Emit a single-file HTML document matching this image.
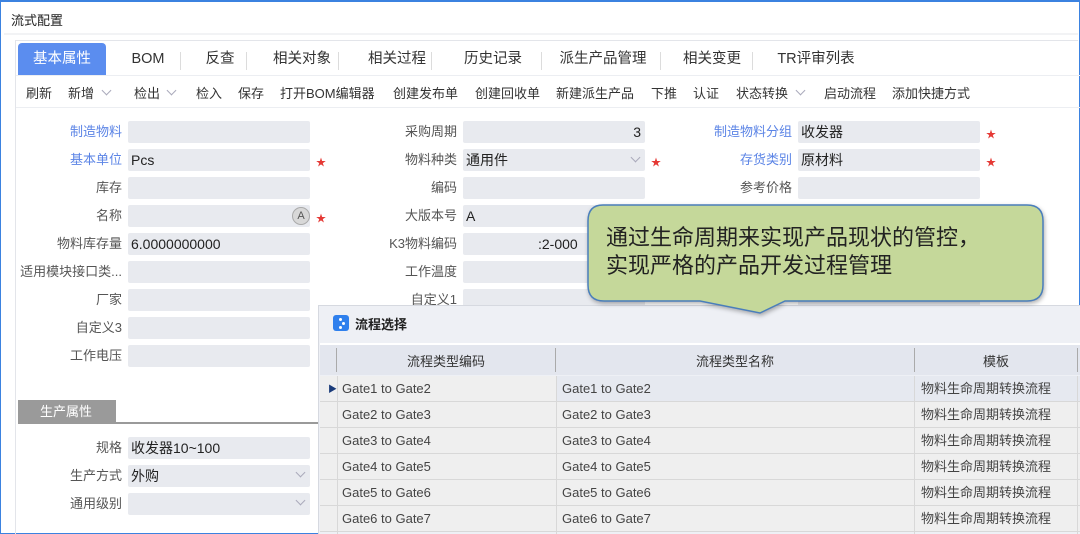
<!DOCTYPE html>
<html><head><meta charset="utf-8"><style>
*{margin:0;padding:0;box-sizing:border-box}
body{width:1080px;height:534px;overflow:hidden;background:#fff;font-family:"Liberation Sans","Noto Sans CJK SC",sans-serif;position:relative;color:#333}
.a{position:absolute;white-space:nowrap}
.lb{position:absolute;font-size:13px;color:#555;text-align:right;width:120px;line-height:22px}
.bl{color:#5b84e6}
.in{position:absolute;height:22px;background:#e8eaef;border-radius:2px;font-size:14px;color:#222;line-height:22px;padding-left:3px}
.st{position:absolute;color:#e53935;font-size:10px}
.tab{position:absolute;top:42px;height:32px;line-height:34px;font-size:14.5px;color:#333;text-align:center}
.sep{position:absolute;top:52px;width:1px;height:18px;background:#dcdcdc}
.tb{position:absolute;top:83px;font-size:13px;color:#333}
.chev{position:absolute;width:7px;height:7px;border-right:1px solid #aab;border-bottom:1px solid #aab;transform:rotate(45deg)}
.row{position:absolute;left:320px;width:760px;height:26px;font-size:13px;color:#444;line-height:26px;border-bottom:1px solid #d8d8d8;background:#efefef}
.row span{position:absolute;top:0}
</style></head><body>
<div class="a" style="left:0;top:0;width:1080px;height:534px;border:1px solid #3b82e0;border-top:2px solid #3b82e0"></div>
<div class="a" style="left:11px;top:10px;font-size:13px;color:#222">流式配置</div>
<div class="a" style="left:4px;top:33px;width:1074px;height:2px;background:#f2f3f5"></div>
<div class="a" style="left:15px;top:40px;width:1063px;height:494px;border-left:1px solid #e3e5ea;border-top:1px solid #e3e5ea"></div>
<div class="a" style="left:18px;top:43px;width:88px;height:32px;background:#5b8def;border-radius:4px 4px 0 0"></div>
<div class="tab" style="left:18px;width:88px;color:#fff">基本属性</div>
<div class="tab" style="left:118px;width:60px">BOM</div><div class="sep" style="left:180px"></div>
<div class="tab" style="left:190px;width:60px">反查</div><div class="sep" style="left:246px"></div>
<div class="tab" style="left:262px;width:80px">相关对象</div><div class="sep" style="left:338px"></div>
<div class="tab" style="left:357px;width:80px">相关过程</div><div class="sep" style="left:431px"></div>
<div class="tab" style="left:453px;width:80px">历史记录</div><div class="sep" style="left:541px"></div>
<div class="tab" style="left:553px;width:100px">派生产品管理</div><div class="sep" style="left:660px"></div>
<div class="tab" style="left:672px;width:80px">相关变更</div><div class="sep" style="left:752px"></div>
<div class="tab" style="left:766px;width:100px">TR评审列表</div>
<div class="a" style="left:16px;top:75px;width:1064px;height:1px;background:#eceef2"></div>
<div class="a" style="left:16px;top:107px;width:1064px;height:1px;background:#eceef2"></div>
<div class="tb" style="left:26px">刷新</div>
<div class="tb" style="left:68px">新增</div><div class="chev" style="left:103px;top:87px"></div>
<div class="tb" style="left:134px">检出</div><div class="chev" style="left:168px;top:87px"></div>
<div class="tb" style="left:196px">检入</div>
<div class="tb" style="left:238px">保存</div>
<div class="tb" style="left:280px">打开BOM编辑器</div>
<div class="tb" style="left:393px">创建发布单</div>
<div class="tb" style="left:475px">创建回收单</div>
<div class="tb" style="left:556px">新建派生产品</div>
<div class="tb" style="left:651px">下推</div>
<div class="tb" style="left:693px">认证</div>
<div class="tb" style="left:736px">状态转换</div><div class="chev" style="left:797px;top:87px"></div>
<div class="tb" style="left:824px">启动流程</div>
<div class="tb" style="left:892px">添加快捷方式</div>

<div class="lb bl" style="left:2px;top:121px">制造物料</div><div class="in" style="left:128px;top:121px;width:182px"></div>
<div class="lb bl" style="left:2px;top:149px">基本单位</div><div class="in" style="left:128px;top:149px;width:182px">Pcs</div><div class="st" style="left:316px;top:154px">★</div>
<div class="lb" style="left:2px;top:177px">库存</div><div class="in" style="left:128px;top:177px;width:182px"></div>
<div class="lb" style="left:2px;top:205px">名称</div><div class="in" style="left:128px;top:205px;width:182px"></div>
<div class="a" style="left:292px;top:207px;width:18px;height:18px;border-radius:50%;background:#d8d8d8;border:1px solid #aaa;font-size:11px;text-align:center;line-height:16px;color:#555">A</div><div class="st" style="left:316px;top:210px">★</div>
<div class="lb" style="left:2px;top:233px">物料库存量</div><div class="in" style="left:128px;top:233px;width:182px">6.0000000000</div>
<div class="lb" style="left:2px;top:261px">适用模块接口类...</div><div class="in" style="left:128px;top:261px;width:182px"></div>
<div class="lb" style="left:2px;top:289px">厂家</div><div class="in" style="left:128px;top:289px;width:182px"></div>
<div class="lb" style="left:2px;top:317px">自定义3</div><div class="in" style="left:128px;top:317px;width:182px"></div>
<div class="lb" style="left:2px;top:345px">工作电压</div><div class="in" style="left:128px;top:345px;width:182px"></div>

<div class="lb" style="left:337px;top:121px">采购周期</div><div class="in" style="left:463px;top:121px;width:182px;text-align:right;padding-right:4px">3</div>
<div class="lb" style="left:337px;top:149px">物料种类</div><div class="in" style="left:463px;top:149px;width:182px">通用件</div><div class="chev" style="left:632px;top:154px"></div><div class="st" style="left:651px;top:154px">★</div>
<div class="lb" style="left:337px;top:177px">编码</div><div class="in" style="left:463px;top:177px;width:182px"></div>
<div class="lb" style="left:337px;top:205px">大版本号</div><div class="in" style="left:463px;top:205px;width:182px">A</div>
<div class="lb" style="left:337px;top:233px">K3物料编码</div><div class="in" style="left:463px;top:233px;width:182px;padding-left:75px">:2-000</div>
<div class="lb" style="left:337px;top:261px">工作温度</div><div class="in" style="left:463px;top:261px;width:182px"></div>
<div class="lb" style="left:337px;top:289px">自定义1</div><div class="in" style="left:463px;top:289px;width:182px"></div>

<div class="lb bl" style="left:672px;top:121px">制造物料分组</div><div class="in" style="left:798px;top:121px;width:182px">收发器</div><div class="st" style="left:986px;top:126px">★</div>
<div class="lb bl" style="left:672px;top:149px">存货类别</div><div class="in" style="left:798px;top:149px;width:182px">原材料</div><div class="st" style="left:986px;top:154px">★</div>
<div class="lb" style="left:672px;top:177px">参考价格</div><div class="in" style="left:798px;top:177px;width:182px"></div>
<div class="in" style="left:798px;top:289px;width:182px"></div>

<div class="a" style="left:18px;top:400px;width:98px;height:23px;background:#9a9a9a;color:#fff;font-size:13px;line-height:23px;padding-left:22px">生产属性</div>
<div class="a" style="left:18px;top:422px;width:300px;height:2px;background:#9a9a9a"></div>
<div class="lb" style="left:2px;top:437px">规格</div><div class="in" style="left:128px;top:437px;width:182px">收发器10~100</div>
<div class="lb" style="left:2px;top:465px">生产方式</div><div class="in" style="left:128px;top:465px;width:182px">外购</div><div class="chev" style="left:297px;top:469px"></div>
<div class="lb" style="left:2px;top:493px">通用级别</div><div class="in" style="left:128px;top:493px;width:182px"></div><div class="chev" style="left:297px;top:497px"></div>

<div class="a" style="left:318px;top:305px;width:762px;height:229px;background:#eef0f5;border-top:1px solid #d6d9e0;border-left:1px solid #d6d9e0"></div>
<div class="a" style="left:333px;top:315px;width:16px;height:16px;background:#2f80ed;border-radius:3px"></div>
<div class="a" style="left:339px;top:318px;width:3px;height:3px;background:#fff;border-radius:50%;box-shadow:3px 4px 0 #fff,0 8px 0 #fff"></div>
<div class="a" style="left:355px;top:314px;font-size:13px;font-weight:bold;color:#222">流程选择</div>
<div class="a" style="left:320px;top:343px;width:760px;height:32px;background:#e3e6ee;border-top:2px solid #fff"></div>
<div class="a" style="left:336px;top:348px;width:1px;height:24px;background:#aaa"></div>
<div class="a" style="left:555px;top:348px;width:1px;height:24px;background:#aaa"></div>
<div class="a" style="left:914px;top:348px;width:1px;height:24px;background:#aaa"></div>
<div class="a" style="left:1077px;top:348px;width:1px;height:24px;background:#aaa"></div>
<div class="a" style="left:337px;top:351px;width:218px;text-align:center;font-size:13px;color:#333">流程类型编码</div>
<div class="a" style="left:556px;top:351px;width:358px;text-align:center;font-size:13px;color:#333">流程类型名称</div>
<div class="a" style="left:915px;top:351px;width:162px;text-align:center;font-size:13px;color:#333">模板</div>

<div class="row" style="top:376px"><span style="left:236px;width:594px;height:25px;background:#e6e9f0"></span><span style="left:8px;top:0;font-size:9px;color:#1a3b7a">▶</span><span style="left:22px">Gate1 to Gate2</span><span style="left:242px">Gate1 to Gate2</span><span style="left:601px">物料生命周期转换流程</span></div>
<div class="row" style="top:402px"><span style="left:22px">Gate2 to Gate3</span><span style="left:242px">Gate2 to Gate3</span><span style="left:601px">物料生命周期转换流程</span></div>
<div class="row" style="top:428px"><span style="left:22px">Gate3 to Gate4</span><span style="left:242px">Gate3 to Gate4</span><span style="left:601px">物料生命周期转换流程</span></div>
<div class="row" style="top:454px"><span style="left:22px">Gate4 to Gate5</span><span style="left:242px">Gate4 to Gate5</span><span style="left:601px">物料生命周期转换流程</span></div>
<div class="row" style="top:480px"><span style="left:22px">Gate5 to Gate6</span><span style="left:242px">Gate5 to Gate6</span><span style="left:601px">物料生命周期转换流程</span></div>
<div class="row" style="top:506px"><span style="left:22px">Gate6 to Gate7</span><span style="left:242px">Gate6 to Gate7</span><span style="left:601px">物料生命周期转换流程</span></div>
<div class="a" style="left:337px;top:376px;width:1px;height:158px;background:#d8d8d8"></div>
<div class="a" style="left:556px;top:376px;width:1px;height:158px;background:#d8d8d8"></div>
<div class="a" style="left:914px;top:376px;width:1px;height:158px;background:#d8d8d8"></div>
<div class="a" style="left:1077px;top:376px;width:1px;height:158px;background:#d8d8d8"></div>

<svg class="a" style="left:580px;top:198px" width="475" height="125">
<path d="M23 7 H447 Q463 7 463 23 V87 Q463 103 447 103 H205 L180 115 L120 103 H24 Q8 103 8 87 V23 Q8 7 23 7 Z" fill="#c5d89a" stroke="#4a7ebb" stroke-width="1.5" filter="drop-shadow(1px 2px 2px rgba(0,0,0,.3))"/>
</svg>
<div class="a" style="left:606px;top:224px;font-size:22px;line-height:28px;color:#222">通过生命周期来实现产品现状的管控，<br>实现严格的产品开发过程管理</div>
</body></html>
